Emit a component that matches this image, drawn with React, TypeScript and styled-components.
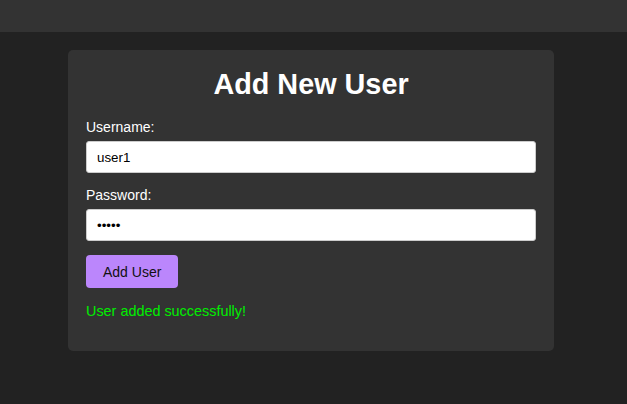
import React from "react";
import styled, { createGlobalStyle } from "styled-components";

const Global = createGlobalStyle`
  html, body { margin: 0; padding: 0; background: #222; }
  body { font-family: "Liberation Sans", Arial, sans-serif; color: #fff; }
  * { box-sizing: border-box; }
`;

const TopBar = styled.header`
  height: 32px;
  background: #333;
`;

const Main = styled.main`
  display: flex;
  justify-content: center;
  padding: 18px 5px 0 0;
  min-height: 372px;
`;

const Card = styled.section`
  width: 486px;
  background: #333;
  border-radius: 5px;
  padding: 18px 18px 31px;
  align-self: flex-start;
`;

const Title = styled.h2`
  margin: 0 0 18px;
  text-align: center;
  font-size: 28.8px;
  font-weight: bold;
  line-height: 33px;
`;

const Form = styled.form`
  display: flex;
  flex-direction: column;
`;

const Label = styled.label`
  display: block;
  font-size: 14px;
  line-height: 16px;
  margin-bottom: 6px;
`;

const Input = styled.input`
  width: 100%;
  height: 32px;
  border: 1px solid #ccc;
  border-radius: 3px;
  padding: 0 10px;
  font-family: "Liberation Sans", Arial, sans-serif;
  font-size: 13.33px;
  color: #000;
  background: #fff;
  margin-bottom: 14px;
  outline: none;
`;

const Button = styled.button`
  align-self: flex-start;
  height: 33px;
  padding: 0 17px;
  border: none;
  border-radius: 4px;
  background: #bb86fc;
  color: #111;
  font-family: "Liberation Sans", Arial, sans-serif;
  font-size: 14px;
  cursor: pointer;
`;

const Message = styled.p<{ $ok?: boolean }>`
  margin: 15px 0 0;
  font-size: 14.4px;
  line-height: 17px;
  color: ${(p) => (p.$ok ? "#00ee00" : "#ff5555")};
`;

export default function App() {
  return (
    <>
      <Global />
      <TopBar />
      <Main>
        <Card>
          <Title>Add New User</Title>
          <Form onSubmit={(e) => e.preventDefault()}>
            <Label htmlFor="username">Username:</Label>
            <Input id="username" type="text" defaultValue="user1" />
            <Label htmlFor="password">Password:</Label>
            <Input id="password" type="password" defaultValue="12345" />
            <Button type="submit">Add User</Button>
          </Form>
          <Message $ok>User added successfully!</Message>
        </Card>
      </Main>
    </>
  );
}
